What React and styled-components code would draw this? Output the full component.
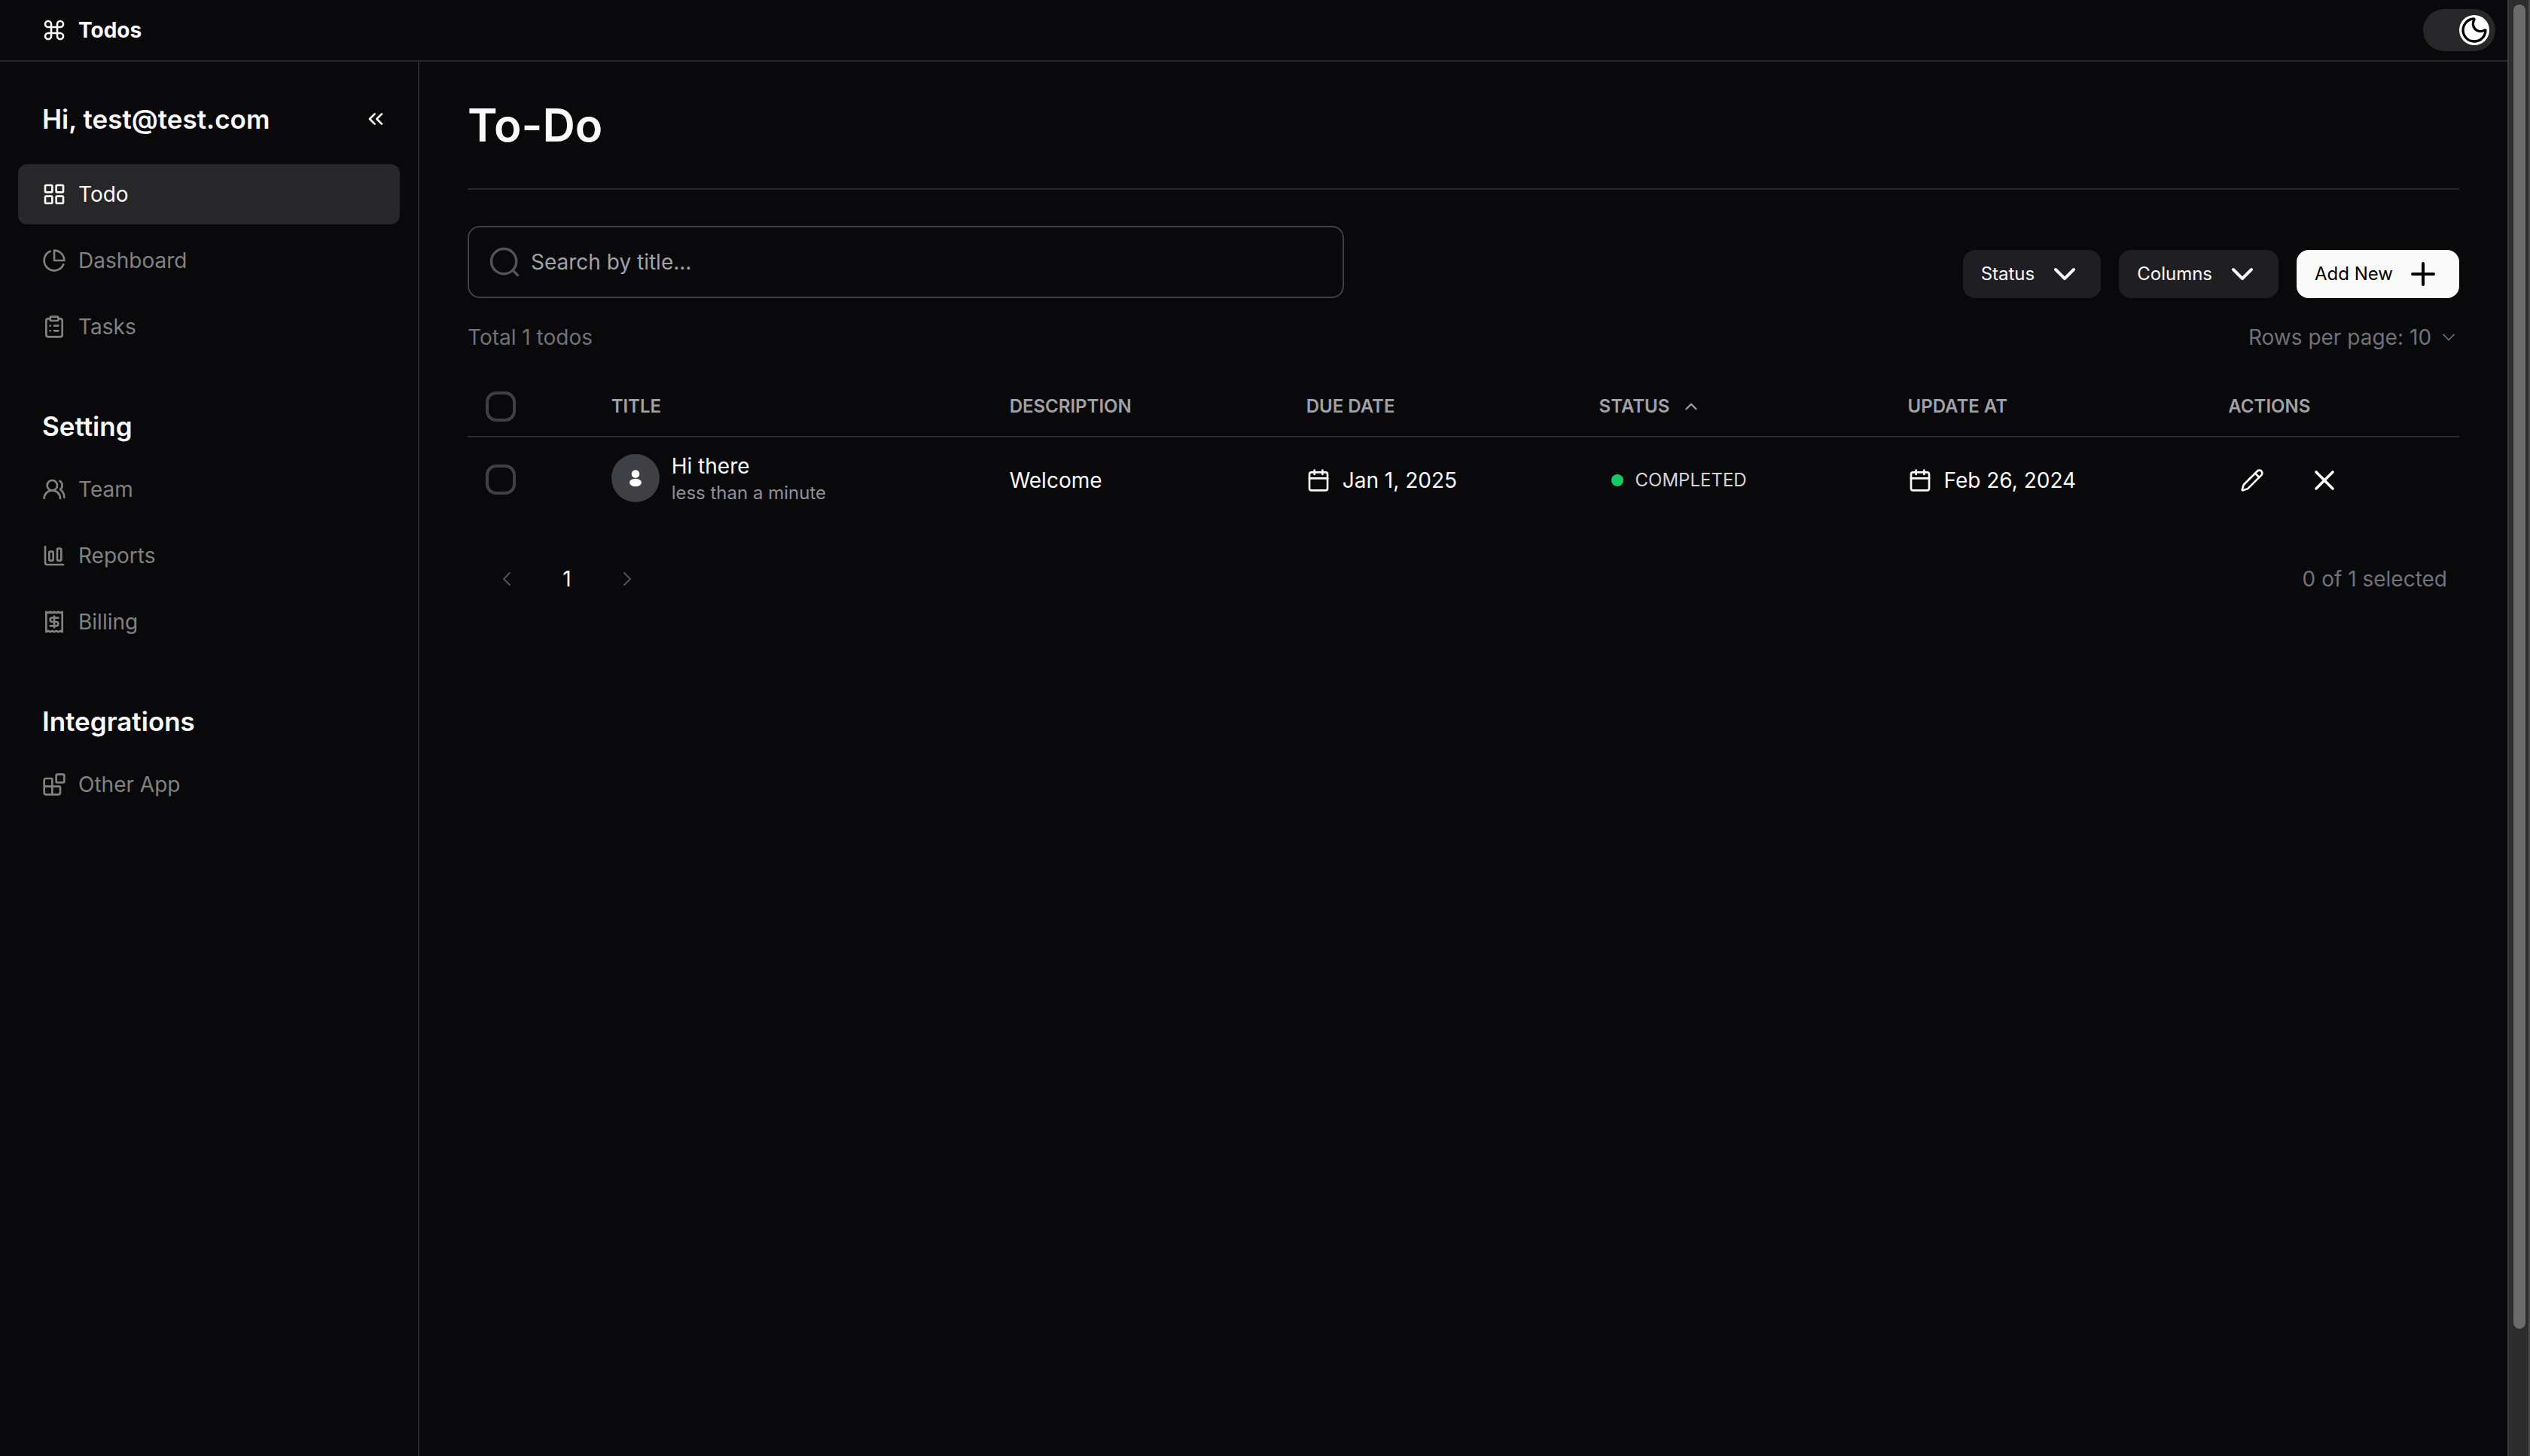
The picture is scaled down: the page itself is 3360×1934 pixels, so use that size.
import React from "react";
import styled, { createGlobalStyle } from "styled-components";
import {
  Blocks,
  Calendar,
  ChartColumnBig,
  ChevronDown,
  ChevronLeft,
  ChevronRight,
  ChevronUp,
  ChevronsLeft,
  ClipboardList,
  Command,
  LayoutGrid,
  Moon,
  Pencil,
  Plus,
  X,
} from "lucide-react";

const color = {
  background: "#09090b",
  foreground: "#fafafa",
  border: "#27272a",
  outline: "#3f3f46",
  muted: "#71717a",
  label: "#a1a1aa",
  nav: "#818182",
};

const GlobalStyle = createGlobalStyle`
  *, *::before, *::after { box-sizing: border-box; }
  body {
    margin: 0;
    background: ${color.background};
    color: ${color.foreground};
    font-family: Inter, "Liberation Sans", sans-serif;
    font-size: 28px;
    line-height: 40px;
    -webkit-font-smoothing: antialiased;
  }
  h1, h2, p { margin: 0; }
  button, input, select { font: inherit; color: inherit; }
  svg { display: block; flex: none; }
`;

const Shell = styled.div`
  display: flex;
  height: 100vh;
`;

const Page = styled.div`
  flex: 1;
  min-width: 0;
  display: flex;
  flex-direction: column;
`;

const ScrollTrack = styled.div`
  width: 30px;
  padding: 6px 4px 6px 6px;
  background: #2c2c2c;
  border-left: 2px solid #3d3d3d;
  border-right: 2px solid #4f4f4f;
`;

const ScrollThumb = styled.div`
  width: 16px;
  height: 91.5%;
  border-radius: 8px;
  background: #6b6b6b;
`;

const Header = styled.header`
  display: flex;
  align-items: center;
  justify-content: space-between;
  height: 82px;
  padding: 0 16px 0 56px;
  border-bottom: 2px solid ${color.border};
`;

const Brand = styled.a`
  display: flex;
  align-items: center;
  gap: 16px;
  font-weight: 700;
  color: inherit;
  text-decoration: none;
`;

const Switch = styled.label`
  position: relative;
  display: flex;
  align-items: center;
  justify-content: flex-end;
  width: 96px;
  height: 56px;
  padding: 0 8px;
  border-radius: 28px;
  background: ${color.border};
`;

const SwitchInput = styled.input`
  position: absolute;
  inset: 0;
  width: 100%;
  height: 100%;
  margin: 0;
  opacity: 0;
`;

const SwitchThumb = styled.span`
  width: 40px;
  height: 40px;
  border-radius: 50%;
  background: #fff;
  color: #000;
`;

const Columns = styled.div`
  flex: 1;
  min-height: 0;
  display: flex;
`;

const Sidebar = styled.aside`
  flex: none;
  width: 557px;
  padding: 40px 24px;
  border-right: 2px solid ${color.border};
  display: flex;
  flex-direction: column;
  gap: 64px;
`;

const Greeting = styled.div`
  display: flex;
  align-items: center;
  justify-content: space-between;
  height: 72px;
  margin-bottom: 24px;
  padding: 0 16px 0 32px;
`;

const Heading = styled.h2`
  font-size: 35px;
  line-height: 56px;
  font-weight: 600;
`;

const GroupHeading = styled(Heading)`
  margin-bottom: 16px;
  padding: 0 32px;
`;

const NavList = styled.nav`
  display: flex;
  flex-direction: column;
  gap: 8px;
`;

const NavLink = styled.a`
  display: flex;
  align-items: center;
  gap: 16px;
  height: 80px;
  padding: 0 32px;
  border-radius: 12px;
  text-decoration: none;
  color: ${(p) => (p.$active ? color.foreground : color.nav)};
  background: ${(p) => (p.$active ? color.border : "transparent")};
`;

const IconButton = styled.button`
  display: flex;
  align-items: center;
  justify-content: center;
  width: 64px;
  height: 64px;
  padding: 0;
  border: 0;
  background: none;
  color: ${(p) => (p.$dim ? "#52525b" : color.foreground)};
`;

const CollapseButton = styled(IconButton)`
  width: 32px;
`;

const Main = styled.main`
  flex: 1;
  min-width: 0;
  padding: 48px 64px;
`;

const Title = styled.h1`
  padding-bottom: 48px;
  border-bottom: 2px solid ${color.border};
  font-size: 60px;
  line-height: 72px;
  font-weight: 600;
`;

const Toolbar = styled.div`
  display: flex;
  align-items: flex-end;
  justify-content: space-between;
  margin-top: 48px;
`;

const SearchField = styled.label`
  display: flex;
  align-items: center;
  gap: 14px;
  width: 44%;
  height: 96px;
  padding: 0 26px;
  border: 2px solid ${color.outline};
  border-radius: 16px;
  color: #52525b;
`;

const SearchInput = styled.input`
  flex: 1;
  min-width: 0;
  padding: 0;
  border: 0;
  outline: 0;
  background: none;
  color: ${color.foreground};
  &::placeholder {
    color: ${color.label};
    opacity: 1;
  }
`;

const ButtonRow = styled.div`
  display: flex;
  gap: 24px;
`;

const Button = styled.button`
  display: flex;
  align-items: center;
  gap: 16px;
  height: 64px;
  padding: 0 24px;
  border: 0;
  border-radius: 16px;
  font-size: 24px;
  line-height: 32px;
  color: ${(p) => (p.$primary ? "#000" : color.foreground)};
  background: ${(p) => (p.$primary ? color.foreground : "#1f1f23")};
`;

const Summary = styled.div`
  display: flex;
  align-items: center;
  justify-content: space-between;
  margin: 32px 0;
  color: ${color.muted};
`;

const PageSize = styled.label`
  display: flex;
  align-items: center;
  gap: 8px;
`;

const PageSizeSelect = styled.select`
  appearance: none;
  padding: 0;
  border: 0;
  background: none;
  line-height: 40px;
`;

const Table = styled.table`
  width: 100%;
  table-layout: fixed;
  border-collapse: separate;
  border-spacing: 0;
`;

const HeadCell = styled.th`
  width: ${(p) => p.$width};
  height: 81px;
  padding: 0 24px;
  border-bottom: 2px solid #2e2e32;
  text-align: left;
  font-size: 24px;
  line-height: 32px;
  font-weight: 600;
  color: ${color.label};
`;

const Cell = styled.td`
  height: 112px;
  padding: 0 24px;
`;

const TextCell = styled(Cell)`
  padding-top: 2px;
`;

const TitleCell = styled(Cell)`
  padding-bottom: 4px;
`;

const Inline = styled.div`
  display: flex;
  align-items: center;
  gap: 16px;
`;

const Actions = styled(Inline)`
  gap: 32px;
`;

const Checkbox = styled.input`
  appearance: none;
  display: block;
  width: 40px;
  height: 40px;
  margin: 0;
  border: 4px solid ${color.outline};
  border-radius: 14px;
`;

const Avatar = styled.span`
  display: flex;
  align-items: center;
  justify-content: center;
  width: 64px;
  height: 64px;
  border-radius: 50%;
  background: ${color.outline};
`;

const Age = styled.p`
  font-size: 24px;
  line-height: 32px;
  color: #8f8f98;
`;

const Status = styled(Inline)`
  padding-left: 16px;
  font-size: 24px;
  line-height: 32px;
  color: #d4d4d8;
`;

const Dot = styled.span`
  width: 16px;
  height: 16px;
  border-radius: 50%;
  background: #17c964;
`;

const Footer = styled.div`
  display: flex;
  align-items: center;
  justify-content: space-between;
  margin-top: 40px;
  padding: 0 16px;
  color: ${color.muted};
`;

const Pagination = styled.nav`
  display: flex;
  gap: 8px;
`;

const PageButton = styled(IconButton)`
  width: 72px;
  height: 72px;
`;

const TeamIcon = () => (
  <svg width="32" height="32" viewBox="0 0 24 24" fill="none" stroke="currentColor" strokeWidth="2" strokeLinecap="round" strokeLinejoin="round">
    <path d="M18 21a8 8 0 0 0-16 0" />
    <circle cx="10" cy="8" r="5" />
    <path d="M22 20c0-3.37-2-6.5-4-8a5 5 0 0 0-.45-8.3" />
  </svg>
);

const PieIcon = () => (
  <svg width="32" height="32" viewBox="0 0 24 24" fill="none" stroke="currentColor" strokeWidth="2" strokeLinecap="round" strokeLinejoin="round">
    <path d="M21.21 15.89A10 10 0 1 1 8 2.83" />
    <path d="M22 12A10 10 0 0 0 12 2v10z" />
  </svg>
);

const BillingIcon = () => (
  <svg width="32" height="32" viewBox="0 0 24 24" fill="none" stroke="currentColor" strokeWidth="2" strokeLinecap="round" strokeLinejoin="round">
    <path d="M4 2v20l2-1 2 1 2-1 2 1 2-1 2 1 2-1 2 1V2l-2 1-2-1-2 1-2-1-2 1-2-1-2 1Z" />
    <path d="M16 8h-6a2 2 0 1 0 0 4h4a2 2 0 1 1 0 4H8" />
    <path d="M12 17.5v-11" />
  </svg>
);

const SearchIcon = () => (
  <svg width="42" height="42" viewBox="0 0 24 24" fill="none" stroke="currentColor" strokeWidth="2" strokeLinecap="round">
    <circle cx="11.5" cy="11.5" r="9.5" />
    <path d="M22 22l-3.6-3.6" />
  </svg>
);

const PersonIcon = () => (
  <svg width="32" height="32" viewBox="0 0 32 32" fill="#fff">
    <circle cx="16" cy="10.5" r="5.3" />
    <ellipse cx="16" cy="22" rx="8" ry="5.2" />
  </svg>
);

const primaryLinks = [
  { label: "Todo", icon: <LayoutGrid size={32} />, active: true },
  { label: "Dashboard", icon: <PieIcon /> },
  { label: "Tasks", icon: <ClipboardList size={32} /> },
];

const groups = [
  {
    title: "Setting",
    links: [
      { label: "Team", icon: <TeamIcon /> },
      { label: "Reports", icon: <ChartColumnBig size={32} /> },
      { label: "Billing", icon: <BillingIcon /> },
    ],
  },
  { title: "Integrations", links: [{ label: "Other App", icon: <Blocks size={32} /> }] },
];

const todos = [
  {
    title: "Hi there",
    age: "less than a minute",
    description: "Welcome",
    due: "Jan 1, 2025",
    status: "COMPLETED",
    updated: "Feb 26, 2024",
  },
];

function Links({ items }) {
  return (
    <NavList>
      {items.map((item) => (
        <NavLink key={item.label} href="#" $active={item.active}>
          {item.icon}
          {item.label}
        </NavLink>
      ))}
    </NavList>
  );
}

export default function App() {
  return (
    <>
      <GlobalStyle />
      <Shell>
        <Page>
          <Header>
            <Brand href="#">
              <Command size={32} />
              Todos
            </Brand>
            <Switch>
              <SwitchInput type="checkbox" role="switch" aria-label="Dark mode" defaultChecked />
              <SwitchThumb>
                <Moon size={40} />
              </SwitchThumb>
            </Switch>
          </Header>
          <Columns>
            <Sidebar>
              <div>
                <Greeting>
                  <Heading>Hi, test@test.com</Heading>
                  <CollapseButton aria-label="Collapse sidebar">
                    <ChevronsLeft size={32} />
                  </CollapseButton>
                </Greeting>
                <Links items={primaryLinks} />
              </div>
              {groups.map((group) => (
                <div key={group.title}>
                  <GroupHeading>{group.title}</GroupHeading>
                  <Links items={group.links} />
                </div>
              ))}
            </Sidebar>
            <Main>
              <Title>To-Do</Title>
              <Toolbar>
                <SearchField>
                  <SearchIcon />
                  <SearchInput type="text" aria-label="Search" placeholder="Search by title..." />
                </SearchField>
                <ButtonRow>
                  <Button>
                    Status
                    <ChevronDown size={48} />
                  </Button>
                  <Button>
                    Columns
                    <ChevronDown size={48} />
                  </Button>
                  <Button $primary>
                    Add New
                    <Plus size={48} />
                  </Button>
                </ButtonRow>
              </Toolbar>
              <Summary>
                <span>Total 1 todos</span>
                <PageSize>
                  Rows per page:
                  <PageSizeSelect defaultValue="10">
                    <option>5</option>
                    <option>10</option>
                    <option>15</option>
                  </PageSizeSelect>
                  <ChevronDown size={28} strokeWidth={1.5} />
                </PageSize>
              </Summary>
              <Table>
                <thead>
                  <tr>
                    <HeadCell $width="6.3%">
                      <Checkbox type="checkbox" aria-label="Select all" />
                    </HeadCell>
                    <HeadCell $width="20%">TITLE</HeadCell>
                    <HeadCell $width="14.9%">DESCRIPTION</HeadCell>
                    <HeadCell $width="14.7%">DUE DATE</HeadCell>
                    <HeadCell $width="15.5%">
                      <Inline>
                        STATUS
                        <ChevronUp size={26} />
                      </Inline>
                    </HeadCell>
                    <HeadCell $width="16.1%">UPDATE AT</HeadCell>
                    <HeadCell $width="12.5%">ACTIONS</HeadCell>
                  </tr>
                </thead>
                <tbody>
                  {todos.map((todo) => (
                    <tr key={todo.title}>
                      <Cell>
                        <Checkbox type="checkbox" aria-label={`Select ${todo.title}`} />
                      </Cell>
                      <TitleCell>
                        <Inline>
                          <Avatar>
                            <PersonIcon />
                          </Avatar>
                          <div>
                            <p>{todo.title}</p>
                            <Age>{todo.age}</Age>
                          </div>
                        </Inline>
                      </TitleCell>
                      <TextCell>{todo.description}</TextCell>
                      <TextCell>
                        <Inline>
                          <Calendar size={32} />
                          {todo.due}
                        </Inline>
                      </TextCell>
                      <TextCell>
                        <Status>
                          <Dot />
                          {todo.status}
                        </Status>
                      </TextCell>
                      <TextCell>
                        <Inline>
                          <Calendar size={32} />
                          {todo.updated}
                        </Inline>
                      </TextCell>
                      <TextCell>
                        <Actions>
                          <IconButton aria-label="Edit">
                            <Pencil size={32} />
                          </IconButton>
                          <IconButton aria-label="Delete">
                            <X size={44} />
                          </IconButton>
                        </Actions>
                      </TextCell>
                    </tr>
                  ))}
                </tbody>
              </Table>
              <Footer>
                <Pagination aria-label="Pagination">
                  <PageButton $dim aria-label="Previous page">
                    <ChevronLeft size={32} strokeWidth={1.5} />
                  </PageButton>
                  <PageButton aria-current="page">1</PageButton>
                  <PageButton $dim aria-label="Next page">
                    <ChevronRight size={32} strokeWidth={1.5} />
                  </PageButton>
                </Pagination>
                <span>0 of 1 selected</span>
              </Footer>
            </Main>
          </Columns>
        </Page>
        <ScrollTrack aria-hidden="true">
          <ScrollThumb />
        </ScrollTrack>
      </Shell>
    </>
  );
}
